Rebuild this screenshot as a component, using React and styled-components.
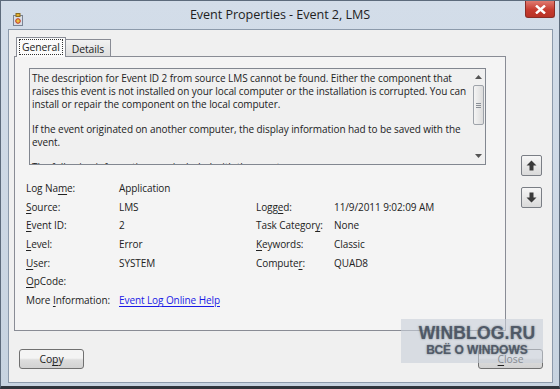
import styled, { createGlobalStyle } from "styled-components";

const GlobalStyle = createGlobalStyle`
  body {
    margin: 0;
    background: #2b2f36;
    font-family: "Open Sans", "Noto Sans", sans-serif;
  }
`;

const Window = styled.div`
  position: relative;
  width: 560px;
  height: 389px;
  box-sizing: border-box;
  background: linear-gradient(#d3dde9, #c7d3e0);
  border: 1px solid #5d6b7c;
  border-bottom-width: 3px;
  border-bottom-color: #30353c;
  display: flex;
  flex-direction: column;
  overflow: hidden;
`;

const TitleBar = styled.div`
  height: 28px;
  display: grid;
  grid-template-columns: 1fr auto 1fr;
  align-items: start;
`;

const TitleIcon = styled.div`
  padding: 8px 0 0 12px;
  height: 14px;
`;

const Title = styled.div`
  padding-top: 5px;
  font-family: "Open Sans", sans-serif;
  font-size: 12.6px;
  color: #1e1e1e;
  letter-spacing: -0.05px;
`;

const CloseX = styled.div`
  justify-self: end;
  margin-right: 4px;
  width: 30px;
  height: 17px;
  border: 1px solid #8a2c25;
  border-top: none;
  border-radius: 0 0 3px 3px;
  background: linear-gradient(#e07a70, #c63b2f 55%, #b83226);
  display: flex;
  align-items: center;
  justify-content: center;
  box-sizing: border-box;
`;

const Client = styled.div`
  flex: 1;
  margin: 0 6px 3px 7px;
  border: 1px solid #8c9aab;
  background: #f0f0f0;
  display: flex;
  flex-direction: column;
  padding: 7px 0 0 5px;
  font-size: 10px;
  letter-spacing: -0.08px;
  color: #222;
`;

const Body = styled.div`
  display: flex;
  align-items: flex-start;
`;

const TabArea = styled.div`
  width: 492px;
  display: flex;
  flex-direction: column;
`;

const TabStrip = styled.div`
  display: flex;
  align-items: flex-end;
  height: 20px;
  padding-left: 2px;
  position: relative;
  z-index: 1;
`;

const Tab = styled.div`
  height: ${(p) => (p.$active ? "20px" : "18px")};
  box-sizing: border-box;
  padding: ${(p) => (p.$active ? "2px 3px 0" : "2px 4px 0")};
  border: 1px solid #898c95;
  border-bottom: ${(p) => (p.$active ? "none" : "1px solid #898c95")};
  border-left: ${(p) => (p.$active ? "1px solid #898c95" : "none")};
  background: ${(p) => (p.$active ? "#fbfbfb" : "linear-gradient(#f2f2f2, #dedede)")};
  font-size: 10.4px;
`;

const TabLabel = styled.span`
  display: inline-block;
  padding: 0 2px;
  line-height: 14px;
  outline: ${(p) => (p.$focus ? "1px dotted #333" : "none")};
`;

const Panel = styled.div`
  margin-top: -1px;
  height: 275px;
  box-sizing: border-box;
  border: 1px solid #898c95;
  background: #f4f4f4;
  padding: 11px 19px 0 14px;
  display: flex;
  flex-direction: column;
`;

const Description = styled.div`
  height: 97px;
  box-sizing: border-box;
  border: 1px solid #828790;
  background: #f0f0f0;
  display: flex;
  overflow: hidden;
`;

const DescText = styled.div`
  flex: 1;
  padding: 3px 0 0 2px;
  line-height: 12.8px;
  overflow: hidden;

  p {
    margin: 0 0 12.4px;
  }
`;

const ScrollBar = styled.div`
  width: 14px;
  display: flex;
  flex-direction: column;
  align-items: center;
  background: #f0f0f0;
`;

const ScrollArrow = styled.div`
  height: 16px;
  display: flex;
  align-items: center;
  justify-content: center;
`;

const Thumb = styled.div`
  width: 11px;
  height: 40px;
  box-sizing: border-box;
  border: 1px solid #9ea3aa;
  border-radius: 2px;
  background: linear-gradient(90deg, #f4f4f4, #dcdcdc);
  display: flex;
  flex-direction: column;
  align-items: center;
  justify-content: center;
  gap: 1px;
  margin-bottom: auto;
`;

const Grip = styled.div`
  width: 5px;
  height: 1px;
  background: #8a8f96;
`;

const Fields = styled.div`
  margin: 14px 0 0 -3px;
  display: grid;
  grid-template-columns: 93px 137px 78px 1fr;
  grid-auto-rows: 18.6px;
  align-items: center;
`;

const Cell = styled.div`
  grid-column: ${(p) => p.$col || "auto"};
  white-space: nowrap;
`;

const Key = styled.u`
  text-decoration: underline;
  text-underline-offset: 2px;
`;

const Link = styled.a`
  color: #1a1ae6;
  text-decoration: underline;
  text-underline-offset: 2px;
  cursor: pointer;
`;

const SideButtons = styled.div`
  display: flex;
  flex-direction: column;
  gap: 11px;
  margin: 118px 0 0 15px;
`;

const ArrowButton = styled.div`
  width: 21px;
  height: 21px;
  box-sizing: border-box;
  border: 1px solid #7a7e85;
  border-radius: 2px;
  background: linear-gradient(#f6f6f6, #dadada);
  display: flex;
  align-items: center;
  justify-content: center;
`;

const Footer = styled.div`
  margin-top: auto;
  display: flex;
  justify-content: space-between;
  padding: 0 9px 13px 5px;
`;

const Button = styled.div`
  width: 65px;
  height: 20px;
  box-sizing: border-box;
  border: 1px solid #707070;
  border-radius: 3px;
  background: linear-gradient(#f4f4f4 45%, #dddddd 55%, #d2d2d2);
  font-size: 10.4px;
  display: flex;
  align-items: center;
  justify-content: center;
`;

const Watermark = styled.div`
  position: absolute;
  left: 400px;
  top: 318px;
  width: 142px;
  height: 44px;
  background: rgba(200, 207, 217, 0.6);
  display: flex;
  flex-direction: column;
  align-items: center;
  padding-top: 4px;
  box-sizing: border-box;
  font-family: "Liberation Sans", Arial, sans-serif;
  font-weight: 700;
  color: rgba(72, 82, 96, 0.9);
  text-shadow: 0 0 2px rgba(72, 82, 96, 0.7);
  pointer-events: none;
`;

const WmTitle = styled.div`
  font-size: 17.5px;
  line-height: 20px;
  letter-spacing: 0.2px;
  padding-left: 10px;
`;

const WmSub = styled.div`
  font-size: 12px;
  line-height: 14px;
  padding-left: 10px;
`;

function EventIcon() {
  return (
    <svg width="10" height="13" viewBox="0 0 10 13">
      <rect x="0.5" y="2.5" width="9" height="10" fill="#d8dde6" stroke="#7a8494" />
      <rect x="3" y="0.5" width="4" height="3" fill="#e0b030" stroke="#8a6a20" />
      <circle cx="5" cy="8" r="2.3" fill="#e8c040" stroke="#c03020" />
    </svg>
  );
}

function Arrow({ down }) {
  return (
    <svg width="11" height="11" viewBox="0 0 11 11">
      <path
        d="M5.5 0.5 L10.5 5.5 L7.5 5.5 L7.5 10.5 L3.5 10.5 L3.5 5.5 L0.5 5.5 Z"
        fill="#3a3a3a"
        transform={down ? "rotate(180 5.5 5.5)" : undefined}
      />
    </svg>
  );
}

function Caret({ down }) {
  return (
    <svg width="7" height="4" viewBox="0 0 7 4">
      <path d={down ? "M0 0 L7 0 L3.5 4 Z" : "M0 4 L7 4 L3.5 0 Z"} fill="#555" />
    </svg>
  );
}

export default function App() {
  return (
    <>
      <GlobalStyle />
      <Window>
        <TitleBar>
          <TitleIcon>
            <EventIcon />
          </TitleIcon>
          <Title>Event Properties - Event 2, LMS</Title>
          <CloseX>
            <svg width="11" height="9" viewBox="0 0 11 9">
              <path d="M1 0.5 L10 8.5 M10 0.5 L1 8.5" stroke="#fff" strokeWidth="2.4" />
            </svg>
          </CloseX>
        </TitleBar>
        <Client>
          <Body>
            <TabArea>
              <TabStrip>
                <Tab $active>
                  <TabLabel $focus>General</TabLabel>
                </Tab>
                <Tab>
                  <TabLabel>Details</TabLabel>
                </Tab>
              </TabStrip>
              <Panel>
                <Description>
                  <DescText>
                    <p>
                      The description for Event ID 2 from source LMS cannot be found. Either the
                      component that raises this event is not installed on your local computer or
                      the installation is corrupted. You can install or repair the component on
                      the local computer.
                    </p>
                    <p>
                      If the event originated on another computer, the display information had
                      to be saved with the event.
                    </p>
                    <p>The following information was included with the event:</p>
                  </DescText>
                  <ScrollBar>
                    <ScrollArrow>
                      <Caret />
                    </ScrollArrow>
                    <Thumb>
                      <Grip />
                      <Grip />
                      <Grip />
                    </Thumb>
                    <ScrollArrow>
                      <Caret down />
                    </ScrollArrow>
                  </ScrollBar>
                </Description>
                <Fields>
                  <Cell>
                    Log Na<Key>m</Key>e:
                  </Cell>
                  <Cell $col="2 / 5">Application</Cell>
                  <Cell>
                    <Key>S</Key>ource:
                  </Cell>
                  <Cell>LMS</Cell>
                  <Cell>
                    Logg<Key>e</Key>d:
                  </Cell>
                  <Cell>11/9/2011 9:02:09 AM</Cell>
                  <Cell>
                    <Key>E</Key>vent ID:
                  </Cell>
                  <Cell>2</Cell>
                  <Cell>
                    Task Categor<Key>y</Key>:
                  </Cell>
                  <Cell>None</Cell>
                  <Cell>
                    <Key>L</Key>evel:
                  </Cell>
                  <Cell>Error</Cell>
                  <Cell>
                    <Key>K</Key>eywords:
                  </Cell>
                  <Cell>Classic</Cell>
                  <Cell>
                    <Key>U</Key>ser:
                  </Cell>
                  <Cell>SYSTEM</Cell>
                  <Cell>
                    Compute<Key>r</Key>:
                  </Cell>
                  <Cell>QUAD8</Cell>
                  <Cell $col="1 / 5">
                    <Key>O</Key>pCode:
                  </Cell>
                  <Cell>
                    More <Key>I</Key>nformation:
                  </Cell>
                  <Cell $col="2 / 5">
                    <Link>Event Log Online Help</Link>
                  </Cell>
                </Fields>
              </Panel>
            </TabArea>
            <SideButtons>
              <ArrowButton>
                <Arrow />
              </ArrowButton>
              <ArrowButton>
                <Arrow down />
              </ArrowButton>
            </SideButtons>
          </Body>
          <Footer>
            <Button>
              Co<Key>p</Key>y
            </Button>
            <Button>
              <Key>C</Key>lose
            </Button>
          </Footer>
        </Client>
        <Watermark>
          <WmTitle>WINBLOG.RU</WmTitle>
          <WmSub>ВСЁ О WINDOWS</WmSub>
        </Watermark>
      </Window>
    </>
  );
}
